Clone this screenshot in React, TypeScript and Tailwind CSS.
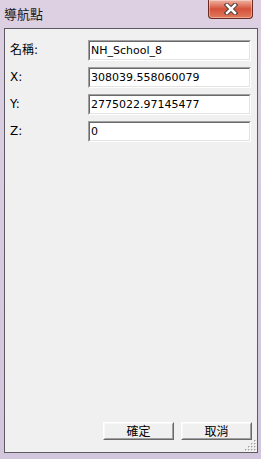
import type { ReactNode } from "react";

const fields = [
  { label: "名稱:", value: "NH_School_8" },
  { label: "X:", value: "308039.558060079" },
  { label: "Y:", value: "2775022.97145477" },
  { label: "Z:", value: "0" },
];

const uiFont = { fontFamily: '"DejaVu Sans", "Noto Sans CJK TC", sans-serif' };
const cjkFont = { fontFamily: '"Noto Sans CJK TC", "DejaVu Sans", sans-serif' };

function DialogButton({ children }: { children: ReactNode }) {
  return (
    <div className="border border-t-white border-l-white border-r-[#696969] border-b-[#696969]">
      <button
        className="flex h-[16px] w-[69px] items-center justify-center border border-t-[#f8f8f8] border-l-[#f8f8f8] border-r-[#a0a0a0] border-b-[#a0a0a0] bg-[#f0f0f0] text-[12px] leading-none text-black"
        style={cjkFont}
        type="button"
      >
        {children}
      </button>
    </div>
  );
}

export default function App() {
  return (
    <div className="flex h-[459px] w-[261px] flex-col bg-gradient-to-b from-[#dcd0e2] via-[#d7cbdf] to-[#d2c6dc]">
      <div className="relative flex h-[28px] shrink-0 items-start">
        <span className="ml-[4px] mt-[5px] text-[13px] leading-[17px] text-[#1a1a1a]" style={cjkFont}>
          導航點
        </span>
        <div className="absolute left-[208px] top-0 flex h-[19px] w-[45px] items-center justify-center rounded-b-[4px] border border-t-0 border-[#6b2a22] bg-gradient-to-b from-[#eeb2a2] via-[#d4513a] to-[#e07a5c] shadow-[inset_0_0_0_1px_rgba(255,255,255,0.35)]">
          <svg height="12" viewBox="0 0 14 12" width="14">
            <path d="M3 2 L11 10 M11 2 L3 10" stroke="#4a3a3a" strokeLinecap="square" strokeWidth="4.5" />
            <path d="M3 2 L11 10 M11 2 L3 10" stroke="#ffffff" strokeLinecap="square" strokeWidth="2.5" />
          </svg>
        </div>
      </div>

      <div className="relative ml-[4px] flex h-[425px] w-[254px] flex-col border border-[#5d5a64] bg-[#f0f0f0]">
        <div className="flex flex-col gap-[6px] pl-[5px] pt-[11px]">
          {fields.map((field) => (
            <div className="flex items-start" key={field.label}>
              <span className="w-[78px] pt-[3px] text-[12px] leading-[14px] text-black" style={uiFont}>
                {field.label}
              </span>
              <div className="border border-t-[#a0a0a0] border-l-[#a0a0a0] border-r-white border-b-white">
                <div
                  className="flex h-[19px] w-[161px] items-center border border-t-[#696969] border-l-[#696969] border-r-[#e3e3e3] border-b-[#e3e3e3] bg-white pl-[1px] text-[11px] leading-none text-black"
                  style={uiFont}
                >
                  {field.value}
                </div>
              </div>
            </div>
          ))}
        </div>

        <div className="mt-auto flex justify-end gap-[7px] pb-[12px] pr-[5px]">
          <DialogButton>確定</DialogButton>
          <DialogButton>取消</DialogButton>
        </div>

        <svg className="absolute bottom-[1px] right-[1px]" height="12" viewBox="0 0 12 12" width="12">
          {[
            [9, 1],
            [6, 4],
            [9, 4],
            [3, 7],
            [6, 7],
            [9, 7],
            [0, 10],
            [3, 10],
            [6, 10],
            [9, 10],
          ].map(([x, y]) => (
            <g key={`${x}-${y}`}>
              <rect fill="#a0a0a0" height="1.5" width="1.5" x={x + 1} y={y} />
              <rect fill="#ffffff" height="1" width="1" x={x + 2} y={y + 1} />
            </g>
          ))}
        </svg>
      </div>
    </div>
  );
}
